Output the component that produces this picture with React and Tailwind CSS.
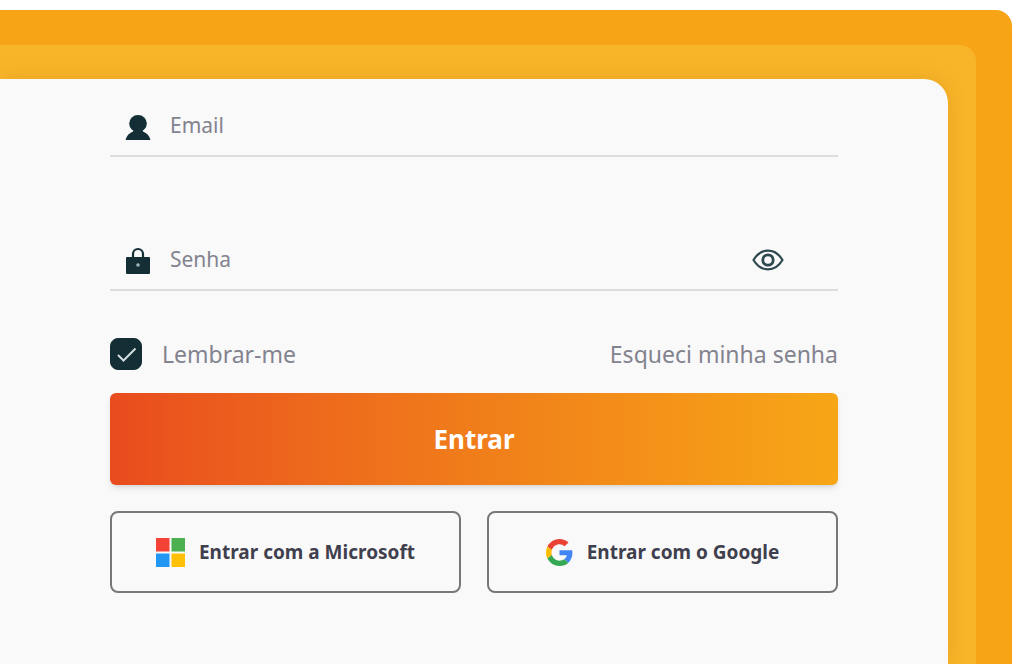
import { useState } from "react";

function UserIcon() {
  return (
    <svg viewBox="0 0 32 32" className="size-8 shrink-0" fill="#132e35" aria-hidden="true">
      <ellipse cx="16" cy="14.500" rx="8.800" ry="8.500" />
      <path d="M12 20h8l1 2.500c4 1.500 6.500 4.500 7.500 8.500h-25c1-4 3.500-7 7.500-8.500z" />
    </svg>
  );
}

function LockIcon() {
  return (
    <svg viewBox="0 0 32 32" className="size-8 shrink-0" aria-hidden="true">
      <path d="M11 15v-4a5 5 0 0 1 10 0v4" fill="none" stroke="#132e35" strokeWidth="2.200" />
      <rect x="4" y="14" width="24" height="17" rx="1" fill="#132e35" />
      <circle cx="16" cy="22" r="1.800" fill="#9fb3b6" />
    </svg>
  );
}

function EyeIcon() {
  return (
    <svg
      viewBox="0 0 32 32"
      className="size-8"
      fill="none"
      stroke="#2f484e"
      strokeWidth="2.200"
      aria-hidden="true"
    >
      <path d="M1.500 17C9 4.500 23 4.500 30.500 17 23 29.500 9 29.500 1.500 17z" strokeLinejoin="round" />
      <circle cx="16" cy="17" r="5.200" strokeWidth="2.800" />
    </svg>
  );
}

function MicrosoftLogo() {
  return (
    <svg viewBox="0 0 29 29" className="size-[29px] shrink-0" aria-hidden="true">
      <path fill="#f44336" d="M0 0h13.500v13.500H0z" />
      <path fill="#4caf50" d="M15.500 0H29v13.500H15.500z" />
      <path fill="#2196f3" d="M0 15.500h13.500V29H0z" />
      <path fill="#ffc107" d="M15.500 15.500H29V29H15.500z" />
    </svg>
  );
}

function GoogleLogo() {
  return (
    <svg viewBox="0 0 48 48" className="size-[27px] shrink-0" aria-hidden="true">
      <path
        fill="#EA4335"
        d="M24 9.500c3.540 0 6.710 1.220 9.210 3.600l6.850-6.850C35.900 2.380 30.470 0 24 0 14.620 0 6.510 5.380 2.560 13.220l7.980 6.190C12.430 13.720 17.740 9.500 24 9.500z"
      />
      <path
        fill="#4285F4"
        d="M46.980 24.550c0-1.570-.15-3.090-.38-4.550H24v9.020h12.940c-.58 2.960-2.260 5.480-4.780 7.180l7.730 6c4.510-4.180 7.090-10.360 7.090-17.650z"
      />
      <path
        fill="#FBBC05"
        d="M10.530 28.590c-.48-1.450-.76-2.990-.76-4.590s.27-3.140.76-4.590l-7.980-6.190C.92 16.460 0 20.120 0 24c0 3.880.92 7.540 2.560 10.780l7.970-6.190z"
      />
      <path
        fill="#34A853"
        d="M24 48c6.480 0 11.930-2.130 15.890-5.810l-7.730-6c-2.150 1.450-4.920 2.300-8.160 2.300-6.260 0-11.570-4.220-13.470-9.910l-7.980 6.190C6.510 42.620 14.620 48 24 48z"
      />
    </svg>
  );
}

function Field({ icon, label, action, ...props }) {
  return (
    <div className="flex h-[62px] items-center gap-4 border-b-2 border-[#dddddd] pl-3">
      {icon}
      <input
        {...props}
        aria-label={label}
        placeholder={label}
        className="min-w-0 flex-1 bg-transparent text-[21px] leading-8 text-[#132e35] outline-none placeholder:text-[#83838f]"
      />
      {action}
    </div>
  );
}

function SocialButton({ icon, children }) {
  return (
    <button
      type="button"
      className="flex h-[82px] items-center justify-center gap-[14px] rounded-lg border-2 border-[#777777] text-[19px] font-bold text-[#3f3f4d]"
    >
      {icon}
      {children}
    </button>
  );
}

function LoginForm() {
  const [showPassword, setShowPassword] = useState(false);

  return (
    <form onSubmit={(e) => e.preventDefault()}>
      <div className="flex flex-col gap-[72px]">
        <Field icon={<UserIcon />} label="Email" type="email" name="email" />
        <Field
          icon={<LockIcon />}
          label="Senha"
          type={showPassword ? "text" : "password"}
          name="password"
          action={
            <button
              type="button"
              aria-label="Mostrar senha"
              className="mr-[54px]"
              onClick={() => setShowPassword(!showPassword)}
            >
              <EyeIcon />
            </button>
          }
        />
      </div>
      <div className="mt-[47px] flex h-8 items-center justify-between text-[23px] text-[#83838f]">
        <label className="flex items-center gap-5">
          <span className="grid size-8 place-items-center">
            <input
              type="checkbox"
              name="remember"
              defaultChecked
              className="peer col-start-1 row-start-1 size-8 appearance-none rounded-lg border border-[#132e35] checked:bg-[#132e35]"
            />
            <svg
              viewBox="0 0 32 32"
              className="pointer-events-none invisible col-start-1 row-start-1 size-8 peer-checked:visible"
              fill="none"
              stroke="#d5dcde"
              strokeWidth="2"
              aria-hidden="true"
            >
              <path d="M8 17l5.500 5.500L25.500 10.500" />
            </svg>
          </span>
          Lembrar-me
        </label>
        <a href="#recuperar">Esqueci minha senha</a>
      </div>
      <button
        type="submit"
        className="mt-[23px] h-[92px] w-full rounded-md bg-linear-to-r from-[#e94b1e] via-[#f07d1a] to-[#f7a616] text-[26px] font-bold text-white shadow-md"
      >
        Entrar
      </button>
      <div className="mt-[26px] grid grid-cols-2 gap-[26px]">
        <SocialButton icon={<MicrosoftLogo />}>Entrar com a Microsoft</SocialButton>
        <SocialButton icon={<GoogleLogo />}>Entrar com o Google</SocialButton>
      </div>
    </form>
  );
}

export default function App() {
  return (
    <div className="flex min-h-screen bg-white pt-[10px] pr-3 font-['Noto_Sans',sans-serif]">
      <div className="flex flex-1 rounded-tr-2xl bg-[#f7a417] pt-[35px] pr-9">
        <div className="flex flex-1 rounded-tr-2xl bg-[#f9b529] pt-[34px] pr-7">
          <main className="flex-1 rounded-tr-3xl bg-[#f9f9f9] px-[110px] pt-4 pb-8 shadow-[0_0_20px_rgba(150,100,0,0.2)]">
            <LoginForm />
          </main>
        </div>
      </div>
    </div>
  );
}
